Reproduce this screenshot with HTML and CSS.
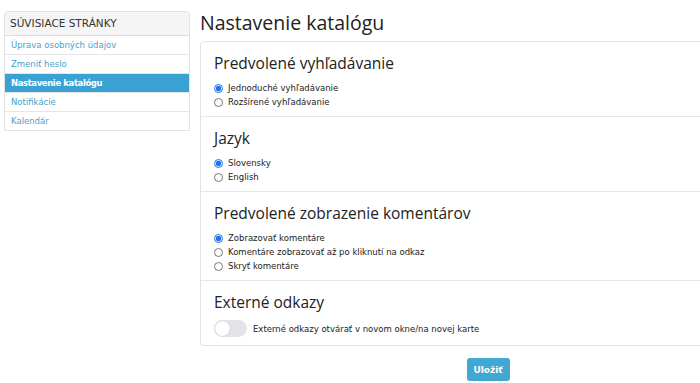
FILE: index.html
```html
<!DOCTYPE html>
<html lang="sk">
<head>
    <meta charset="UTF-8">
    <meta name="viewport" content="width=device-width, initial-scale=1.0">
    <title>Nastavenie katalógu</title>
    <link rel="stylesheet" href="styles.css">
</head>
<body>
    <div class="page">
        <aside class="sidebar">
            <div class="sidebar-head">SÚVISIACE STRÁNKY</div>
            <a href="#" class="side-link">Úprava osobných údajov</a>
            <a href="#" class="side-link">Zmeniť heslo</a>
            <a href="#" class="side-link active">Nastavenie katalógu</a>
            <a href="#" class="side-link">Notifikácie</a>
            <a href="#" class="side-link">Kalendár</a>
        </aside>
        <main class="content">
            <h1>Nastavenie katalógu</h1>
            <form class="card">
                <section class="block">
                    <h2>Predvolené vyhľadávanie</h2>
                    <label class="opt"><input type="radio" name="search" checked> Jednoduché vyhľadávanie</label>
                    <label class="opt"><input type="radio" name="search"> Rozšírené vyhľadávanie</label>
                </section>
                <section class="block">
                    <h2>Jazyk</h2>
                    <label class="opt"><input type="radio" name="lang" checked> Slovensky</label>
                    <label class="opt"><input type="radio" name="lang"> English</label>
                </section>
                <section class="block">
                    <h2>Predvolené zobrazenie komentárov</h2>
                    <label class="opt"><input type="radio" name="comments" checked> Zobrazovať komentáre</label>
                    <label class="opt"><input type="radio" name="comments"> Komentáre zobrazovať až po kliknutí na odkaz</label>
                    <label class="opt"><input type="radio" name="comments"> Skryť komentáre</label>
                </section>
                <section class="block">
                    <h2>Externé odkazy</h2>
                    <label class="switch-row">
                        <span class="switch"><span class="knob"></span></span>
                        Externé odkazy otvárať v novom okne/na novej karte
                    </label>
                </section>
            </form>
            <div class="actions">
                <button type="button" class="btn">Uložiť</button>
            </div>
        </main>
    </div>
</body>
</html>
```

FILE: styles.css
```css
body {
    font-family: "DejaVu Sans", Verdana, sans-serif;
    background-color: #fff;
    color: #222;
    margin: 0;
    padding: 0;
    overflow: hidden;
}

.page {
    display: flex;
    align-items: flex-start;
    gap: 10px;
    padding: 11px 0 0 4px;
    width: 900px;
}

.sidebar {
    width: 184px;
    border: 1px solid #e3e3e3;
    border-radius: 4px 4px 0 0;
    font-size: 8.5px;
}

.sidebar-head {
    background: #f5f5f5;
    color: #333;
    font-size: 10.5px;
    padding: 0 5px;
    height: 23px;
    line-height: 23px;
    border-bottom: 1px solid #dedede;
    border-radius: 4px 4px 0 0;
}

.side-link {
    display: block;
    height: 18px;
    line-height: 18px;
    padding: 0 6px;
    color: #4a9fc8;
    text-decoration: none;
    border-bottom: 1px solid #e6e6e6;
}

.side-link:last-child {
    border-bottom: none;
}

.side-link.active {
    background: #3aa2d3;
    color: #fff;
    font-weight: bold;
    letter-spacing: -0.4px;
}

.content {
    width: 576px;
}

h1 {
    font-family: "Open Sans", sans-serif;
    font-weight: normal;
    font-size: 19.5px;
    margin: 0;
    height: 30px;
    line-height: 24px;
    color: #222;
}

.card {
    border: 1px solid #e2e2e2;
    border-radius: 4px;
    background: #fff;
}

.block {
    padding: 10px 13px 7px;
    border-bottom: 1px solid #e6e6e6;
}

.block:last-child {
    border-bottom: none;
    padding-bottom: 8px;
}

h2 {
    font-family: "Open Sans", sans-serif;
    font-weight: normal;
    font-size: 15.5px;
    margin: 0 0 7px;
    line-height: 22px;
    color: #222;
}

.opt {
    display: flex;
    align-items: center;
    gap: 5px;
    font-size: 8.5px;
    height: 14px;
    color: #222;
}

.opt input {
    margin: 0;
    width: 9px;
    height: 9px;
    accent-color: #1a73e8;
}

.switch-row {
    display: flex;
    align-items: center;
    gap: 6px;
    font-size: 8.5px;
    height: 17px;
}

.switch {
    display: inline-block;
    position: relative;
    width: 33px;
    height: 17px;
    border-radius: 9px;
    background: #e2e4e9;
}

.knob {
    position: absolute;
    left: 1px;
    top: 1px;
    width: 15px;
    height: 15px;
    border-radius: 50%;
    background: #fff;
    box-shadow: 0 0 1px rgba(0, 0, 0, 0.3);
}

.actions {
    display: flex;
    justify-content: center;
    padding-top: 12px;
}

.btn {
    font-family: "DejaVu Sans", sans-serif;
    font-size: 9px;
    font-weight: bold;
    background-color: #42a7d3;
    color: #fff;
    border: none;
    border-radius: 3px;
    height: 23px;
    width: 43px;
    padding: 0;
}
```
